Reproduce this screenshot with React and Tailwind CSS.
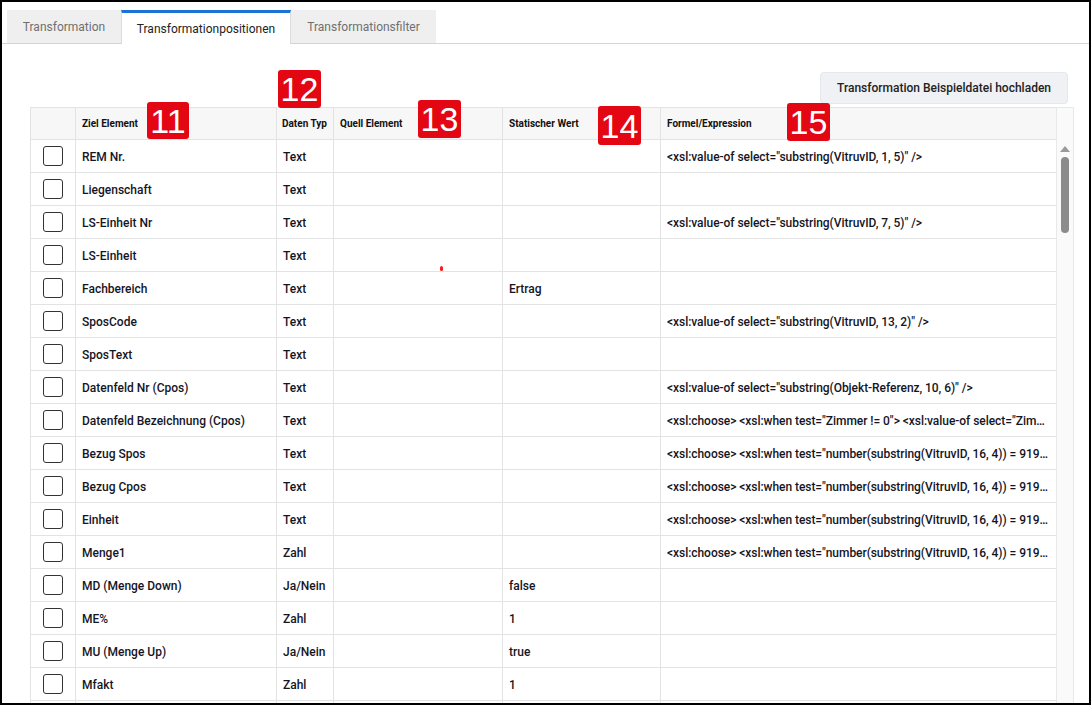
import React from 'react';

const rows = [
  { ziel: 'REM Nr.', typ: 'Text', wert: '', formel: '<xsl:value-of select="substring(VitruvID, 1, 5)" />' },
  { ziel: 'Liegenschaft', typ: 'Text', wert: '', formel: '' },
  { ziel: 'LS-Einheit Nr', typ: 'Text', wert: '', formel: '<xsl:value-of select="substring(VitruvID, 7, 5)" />' },
  { ziel: 'LS-Einheit', typ: 'Text', wert: '', formel: '' },
  { ziel: 'Fachbereich', typ: 'Text', wert: 'Ertrag', formel: '' },
  { ziel: 'SposCode', typ: 'Text', wert: '', formel: '<xsl:value-of select="substring(VitruvID, 13, 2)" />' },
  { ziel: 'SposText', typ: 'Text', wert: '', formel: '' },
  { ziel: 'Datenfeld Nr (Cpos)', typ: 'Text', wert: '', formel: '<xsl:value-of select="substring(Objekt-Referenz, 10, 6)" />' },
  { ziel: 'Datenfeld Bezeichnung (Cpos)', typ: 'Text', wert: '', formel: '<xsl:choose> <xsl:when test="Zimmer != 0"> <xsl:value-of select="Zimmer" /> </xsl:when> </xsl:choose>' },
  { ziel: 'Bezug Spos', typ: 'Text', wert: '', formel: '<xsl:choose> <xsl:when test="number(substring(VitruvID, 16, 4)) = 9199">' },
  { ziel: 'Bezug Cpos', typ: 'Text', wert: '', formel: '<xsl:choose> <xsl:when test="number(substring(VitruvID, 16, 4)) = 9199">' },
  { ziel: 'Einheit', typ: 'Text', wert: '', formel: '<xsl:choose> <xsl:when test="number(substring(VitruvID, 16, 4)) = 9199">' },
  { ziel: 'Menge1', typ: 'Zahl', wert: '', formel: '<xsl:choose> <xsl:when test="number(substring(VitruvID, 16, 4)) = 9199">' },
  { ziel: 'MD (Menge Down)', typ: 'Ja/Nein', wert: 'false', formel: '' },
  { ziel: 'ME%', typ: 'Zahl', wert: '1', formel: '' },
  { ziel: 'MU (Menge Up)', typ: 'Ja/Nein', wert: 'true', formel: '' },
  { ziel: 'Mfakt', typ: 'Zahl', wert: '1', formel: '' },
  { ziel: 'Mfakt2', typ: 'Zahl', wert: '1', formel: '' },
];

const cols = 'grid grid-cols-[45px_201px_57px_169px_158px_396px]';

function Badge({ n, className }) {
  return (
    <div className={`absolute flex items-center justify-center rounded-[3px] bg-[#e30613] text-white text-[34px] leading-none font-['Liberation_Sans',Arial,sans-serif] ${className}`}>
      {n}
    </div>
  );
}

export default function App() {
  const tabs = ['Transformation', 'Transformationpositionen', 'Transformationsfilter'];
  return (
    <div className="w-[1091px] h-[705px] border-2 border-black bg-white overflow-hidden font-['Roboto',sans-serif]">
      {/* tabs */}
      <div className="flex pl-[5px] pt-[8px] border-b border-[#d4d4d4]">
        {tabs.map((t, i) =>
          i === 1 ? (
            <div key={t} className="h-[34px] w-[170px] flex items-center justify-center bg-white border-t-[3px] border-[#1a73d6] border-x border-x-[#dcdcdc] -mb-px text-[12px] text-[#222] whitespace-nowrap">
              {t}
            </div>
          ) : (
            <div key={t} className={`h-[33px] ${i === 0 ? 'w-[114px]' : 'w-[145px]'} flex items-center justify-center bg-[#efefef] text-[12px] text-[#6f6f6f] whitespace-nowrap`}>
              {t}
            </div>
          )
        )}
      </div>

      {/* button row */}
      <div className="flex justify-end pr-[21px] pt-[28px]">
        <button className="h-[32px] px-[16px] rounded-[4px] bg-[#eff1f4] border border-[#e4e7eb] text-[12px] font-medium text-[#222]">
          Transformation Beispieldatei hochladen
        </button>
      </div>

      {/* table */}
      <div className="relative ml-[28px] mt-[3px] flex w-[1044px]">
        <div className="w-[1026px] border-l border-[#e3e3e3] text-[12px] font-medium text-[#15151f]">
          <div className={`${cols} h-[33px] bg-[#f7f7f7] border-y border-[#e3e3e3] text-[10px] font-bold text-[#111] whitespace-nowrap`}>
            <div className="border-r border-[#e3e3e3]" />
            <div className="border-r border-[#e3e3e3] px-[6px] flex items-center">Ziel Element</div>
            <div className="border-r border-[#e3e3e3] px-[5px] flex items-center">Daten Typ</div>
            <div className="border-r border-[#e3e3e3] px-[6px] flex items-center">Quell Element</div>
            <div className="border-r border-[#e3e3e3] px-[6px] flex items-center">Statischer Wert</div>
            <div className="border-r border-[#e3e3e3] px-[6px] flex items-center">Formel/Expression</div>
          </div>
          {rows.map((r) => (
            <div key={r.ziel} className={`${cols} h-[33px] border-b border-[#e3e3e3]`}>
              <div className="border-r border-[#e3e3e3] flex items-center justify-center">
                <div className="w-[20px] h-[20px] rounded-[3px] border border-[#333] bg-white" />
              </div>
              <div className="border-r border-[#e3e3e3] px-[6px] pt-[2px] flex items-center">{r.ziel}</div>
              <div className="border-r border-[#e3e3e3] px-[6px] pt-[2px] flex items-center">{r.typ}</div>
              <div className="border-r border-[#e3e3e3] px-[6px] flex items-center" />
              <div className="border-r border-[#e3e3e3] px-[6px] pt-[2px] flex items-center">{r.wert}</div>
              <div className="border-r border-[#e3e3e3] pl-[6px] pr-[4px] pt-[2px] flex items-center min-w-0">
                <span className="truncate tracking-[-0.05px]">{r.formel}</span>
              </div>
            </div>
          ))}
        </div>

        {/* scrollbar */}
        <div className="w-[18px] border-x border-y border-[#e8e8e8] bg-[#fafafa] flex flex-col items-center pt-[38px]">
          <svg width="10" height="6" viewBox="0 0 10 6" className="mb-[5px]">
            <polygon points="5,0 10,6 0,6" fill="#9a9a9a" />
          </svg>
          <div className="w-[8px] h-[76px] rounded-full bg-[#8c8c8c]" />
        </div>

        <Badge n="11" className="left-[117px] top-[-5px] w-[42px] h-[37px]" />
        <Badge n="12" className="left-[248px] top-[-37px] w-[43px] h-[38px]" />
        <Badge n="13" className="left-[388px] top-[-7px] w-[43px] h-[38px]" />
        <Badge n="14" className="left-[568px] top-[-1px] w-[43px] h-[39px]" />
        <Badge n="15" className="left-[757px] top-[-4px] w-[43px] h-[38px]" />
        <div className="absolute left-[410px] top-[159px] w-[3px] h-[5px] rounded-full bg-[#ff1a1a]" />
      </div>
    </div>
  );
}
